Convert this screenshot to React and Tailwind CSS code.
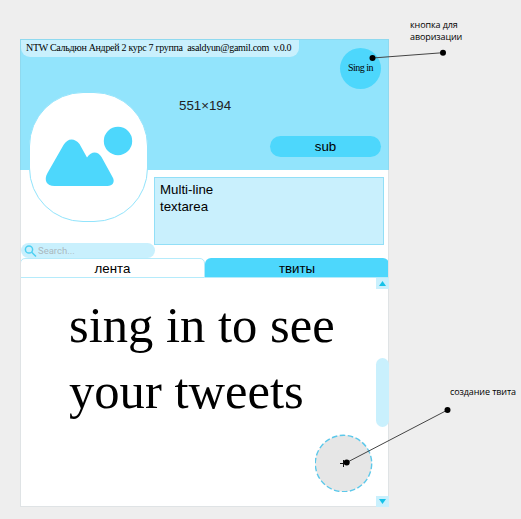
const sans = "font-['Liberation_Sans',Arial,sans-serif]";
const serif = "font-['Liberation_Serif','Times_New_Roman',serif]";

function Avatar() {
  return (
    <div className="absolute left-[8px] top-[52px] h-[130px] w-[119px] rounded-[54px] border border-[#92e4fc] bg-white">
      <svg className="h-full w-full" viewBox="0 0 117 128" fill="#4dd7fc">
        <circle cx="88" cy="48" r="14.2" />
        <path d="M24.500 93C16.500 93 13.500 87 17.500 80L33.500 52C37.500 45 44.500 44.500 49.500 51L57 64.500C61.500 58 67.500 58 71.500 64L82.500 84C85.500 89 82.500 93 77.500 93Z" />
      </svg>
    </div>
  );
}

function Header() {
  return (
    <header className="relative h-[131px] shrink-0 border border-[#8fd9ef] border-b-0 bg-[#92e4fc]">
      <div className={`${serif} h-[17px] w-[278px] whitespace-pre rounded-b-[9px] bg-[#c9f0fd] pl-[5px] text-[10px] leading-[16px] tracking-[-0.3px]`}>
        NTW Сальдюн Андрей 2 курс 7 группа  asaldyun@gamil.com  v.0.0
      </div>
      <div className="flex justify-between pl-[158px] pr-[7px]">
        <span className={`${sans} mt-[39px] text-[13.3px] leading-[20px] text-[#222]`}>551×194</span>
        <button className={`${serif} -mt-[9px] flex size-[41px] items-start justify-center rounded-full bg-[#4dd7fc] text-[10px] leading-[39px] tracking-[-0.5px] whitespace-nowrap`}>
          Sing in
        </button>
      </div>
      <button className={`${sans} ml-[249px] mt-[20px] block h-[21px] w-[111px] rounded-full bg-[#4dd7fc] text-[13.3px] leading-[20px]`}>
        sub
      </button>
      <Avatar />
    </header>
  );
}

function Arrow({ down }) {
  return (
    <div className="flex h-[11px] w-[13px] items-center justify-center bg-[#c9f0fd]">
      <svg width="7" height="5" viewBox="0 0 7 5" fill="#16c2e8">
        <path d={down ? "M0 0H7L3.500 5Z" : "M0 5H7L3.500 0Z"} />
      </svg>
    </div>
  );
}

function Feed() {
  return (
    <main className="relative flex flex-1 justify-between">
      <p className={`${serif} ml-[49px] mt-[14px] w-[280px] text-[50.6px] leading-[66px] text-black`}>
        sing in to see
        <br />
        your tweets
      </p>
      <div className="flex w-[13px] flex-col">
        <Arrow />
        <div className="mt-[69px] h-[69px] rounded-full bg-[#c9f0fd]" />
        <div className="mt-auto">
          <Arrow down />
        </div>
      </div>
      <button className="absolute left-[295px] top-[156px] size-[58px]" aria-label="+">
        <svg className="h-full w-full" viewBox="0 0 58 58">
          <circle cx="28.500" cy="29.500" r="28.200" fill="#e6e6e6" stroke="#5cc8ea" strokeWidth="1.400" strokeDasharray="5.600 2.455" />
          <path d="M25 29.500H32M28.500 26V33" stroke="#111" strokeWidth="1" />
        </svg>
      </button>
    </main>
  );
}

export default function App() {
  return (
    <div className="relative h-[519px] w-[521px] overflow-hidden bg-[#eeeeee] text-black">
      <div className="flex pl-[20px] pt-[39px]">
        <section className="flex h-[468px] w-[369px] flex-col bg-white outline outline-1 -outline-offset-1 outline-[#dfe3e5]">
          <Header />
          <div className={`${sans} ml-[134px] mt-[7px] h-[68px] w-[230px] shrink-0 border border-[#92dff7] bg-[#c9f0fd] pl-[5px] pt-[3px] text-[13.3px] leading-[17px]`}>
            Multi-line
            <br />
            textarea
          </div>
          <div className="-mt-[2px] ml-[1px] flex h-[15px] w-[134px] shrink-0 items-center rounded-full bg-[#c9f0fd] pl-[3px]">
            <svg width="13" height="13" viewBox="0 0 13 13" fill="none" stroke="#4dd0f2" strokeWidth="1.500">
              <circle cx="5" cy="5.500" r="3.600" />
              <path d="M7.700 8.200L12 12.500" />
            </svg>
            <span className="ml-[1px] font-[Roboto,sans-serif] text-[9.5px] leading-[15px] text-[#aab8bf]">Search...</span>
          </div>
          <nav className={`${sans} flex h-[20px] shrink-0 text-[13.3px]`}>
            <div className="w-[185px] rounded-t-[5px] border border-[#b5ebfb] bg-white text-center leading-[19px]">лента</div>
            <div className="flex-1 rounded-t-[6px] border-b border-[#b5ebfb] bg-[#4dd7fc] text-center leading-[21px]">твиты</div>
          </nav>
          <Feed />
        </section>
        <aside className="font-['Open_Sans',sans-serif] text-[9px] leading-[12px] tracking-[-0.1px] whitespace-nowrap">
          <p className="-mt-[20px] ml-[21px]">
            кнопка для
            <br />
            аворизации
          </p>
          <p className="ml-[61px] mt-[343px]">создание твита</p>
        </aside>
      </div>
      <svg className="pointer-events-none absolute inset-0" width="521" height="519" stroke="#444" strokeWidth="1">
        <path d="M372.500 58L443 52.700M346.700 462.500L447.500 410" />
        <g fill="#000" stroke="none">
          <circle cx="372.500" cy="58" r="3" />
          <circle cx="443" cy="52.700" r="3" />
          <circle cx="346.700" cy="462.500" r="3" />
          <circle cx="447.500" cy="410" r="3" />
        </g>
      </svg>
    </div>
  );
}
